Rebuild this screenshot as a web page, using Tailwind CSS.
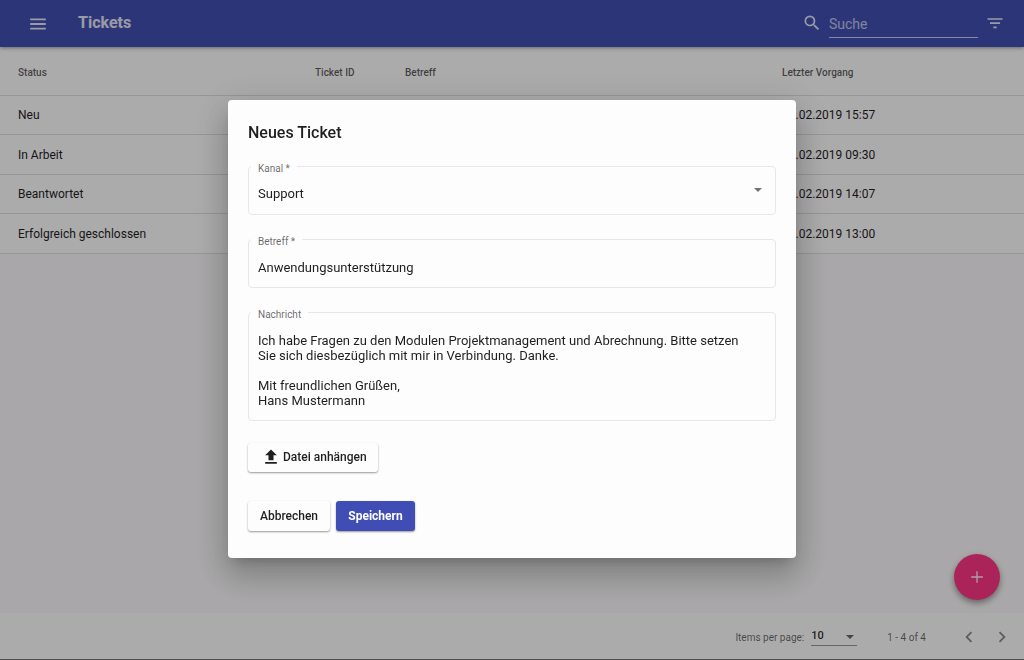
<!DOCTYPE html>
<html lang="de">
<head>
<meta charset="utf-8">
<meta name="viewport" content="width=device-width, initial-scale=1">
<title>Tickets</title>
<script src="https://cdn.jsdelivr.net/npm/@tailwindcss/browser@4"></script>
</head>
<body class="font-['Roboto',sans-serif] text-[#1f1f1f]">
<div class="flex min-h-screen flex-col border-b border-[#777] bg-[#f9f7f9]">
  <header class="relative z-10 flex h-[47px] items-center bg-[#434fb3] pr-[19px] pl-[27px] text-white/85 shadow-[0_1px_4px_rgba(0,0,0,0.4)]">
    <button type="button" aria-label="Menü" class="size-[22px]">
      <svg viewBox="0 0 24 24" class="mb-[2px] size-[22px]" fill="currentColor"><path d="M3.500 18h17v-2h-17v2zm0-5h17v-2h-17v2zm0-7v2h17V6h-17z"/></svg>
    </button>
    <h1 class="ml-[29px] pb-[2px] text-base font-bold">Tickets</h1>
    <div class="ml-auto flex items-center">
      <label for="suche" aria-label="Suche"><svg viewBox="0 0 24 24" class="mb-[2px] size-5" fill="currentColor"><path d="M15.5 14h-.79l-.28-.27A6.471 6.471 0 0 0 16 9.5 6.5 6.5 0 1 0 9.500 16c1.610 0 3.090-.59 4.230-1.570l.27.28v.79l5 4.990L20.490 19l-4.990-5zm-6 0C7.010 14 5 11.990 5 9.500S7.010 5 9.500 5 14 7.010 14 9.500 11.990 14 9.500 14z"/></svg></label>
      <input id="suche" type="text" placeholder="Suche" class="mt-2 ml-[7px] h-[21px] w-[149px] border-b border-white/70 bg-transparent pb-[6px] text-sm outline-none placeholder:text-white/65">
      <button type="button" aria-label="Filter" class="ml-[7px] size-5">
        <svg viewBox="0 0 24 24" class="size-5" fill="currentColor"><path d="M10 17h4v-2h-4v2zM3 5v2h18V5H3zm3 7h12v-2H6v2z"/></svg>
      </button>
    </div>
  </header>

  <main class="flex-1">
    <table class="w-full table-fixed border-separate border-spacing-0 bg-[#fefcfe] text-left text-xs [&_td]:border-b [&_td]:border-black/12 [&_th]:border-b [&_th]:border-black/12 [&_th]:pt-[3px] [&_td:first-child]:pl-[18px] [&_th:first-child]:pl-[18px]">
      <colgroup><col class="w-[315px]"><col class="w-[90px]"><col><col class="w-[242px]"></colgroup>
      <thead>
        <tr class="h-[49px] text-[10px] text-black/65"><th class="font-medium">Status</th><th class="font-medium">Ticket ID</th><th class="font-medium">Betreff</th><th class="font-medium">Letzter Vorgang</th></tr>
      </thead>
      <tbody>
        <tr class="h-[39px]"><td>Neu</td><td></td><td></td><td>18.02.2019 15:57</td></tr>
        <tr class="h-[40px]"><td>In Arbeit</td><td></td><td></td><td>18.02.2019 09:30</td></tr>
        <tr class="h-[39px]"><td>Beantwortet</td><td></td><td></td><td>15.02.2019 14:07</td></tr>
        <tr class="h-[40px]"><td>Erfolgreich geschlossen</td><td></td><td></td><td>14.02.2019 13:00</td></tr>
      </tbody>
    </table>
  </main>

  <footer class="flex h-[46px] items-center justify-end bg-[#fefcfe] pt-[2px] pr-[11px] text-[10px] text-black/60">
    <label for="pagesize">Items per page:</label>
    <div class="relative ml-[7px] flex items-center">
      <select id="pagesize" class="h-[18px] w-[46px] appearance-none border-b border-black/40 bg-transparent text-[11px] font-medium text-black/85"><option>10</option><option>25</option></select>
      <svg viewBox="0 0 8 4" class="pointer-events-none absolute right-[3px] h-1 w-2" fill="currentColor"><path d="M0 0h8L4 4z"/></svg>
    </div>
    <span class="ml-[30px]">1 - 4 of 4</span>
    <button type="button" aria-label="Vorherige Seite" class="ml-8 size-[22px] text-black/45"><svg viewBox="0 0 24 24" class="size-[22px]" fill="currentColor"><path d="M15.410 7.410L14 6l-6 6 6 6 1.410-1.410L10.830 12z"/></svg></button>
    <button type="button" aria-label="Nächste Seite" class="ml-[11px] size-[22px] text-black/45"><svg viewBox="0 0 24 24" class="size-[22px]" fill="currentColor"><path d="M10 6L8.590 7.410 13.170 12l-4.580 4.590L10 18l6-6z"/></svg></button>
  </footer>
</div>

<button type="button" aria-label="Neues Ticket" class="fixed right-6 bottom-[60px] flex size-[46px] items-center justify-center rounded-full bg-[#fc3684] text-white/90 shadow-[0_3px_6px_rgba(0,0,0,0.4)]">
  <svg viewBox="0 0 24 24" class="size-5" fill="currentColor"><path d="M19 12.800h-6.200v6.200h-1.600v-6.200H5v-1.600h6.200V5h1.600v6.200h6.200v1.600z"/></svg>
</button>

<div class="fixed inset-0 z-20 flex items-center justify-center bg-black/32 pb-[3px]">
  <form role="dialog" aria-labelledby="titel" class="w-[568px] max-w-full rounded-[4px] bg-[#fefdfe] px-5 pt-[21px] pb-[27px] shadow-[0_9px_12px_-6px_rgba(0,0,0,0.2),0_19px_30px_3px_rgba(0,0,0,0.14),0_7px_36px_6px_rgba(0,0,0,0.12)]">
    <h2 id="titel" class="text-base font-medium">Neues Ticket</h2>
    <div class="mt-[21px] flex flex-col gap-6 text-[13px]">
      <div class="relative">
        <label for="kanal" class="absolute -top-1 left-[3px] bg-[#fefdfe] px-[7px] text-[10px] leading-[14px] text-black/60">Kanal *</label>
        <select id="kanal" class="block h-[49px] w-full appearance-none rounded-[4px] border border-[#e9e6ea] bg-transparent px-[9px] pt-2"><option>Support</option></select>
        <svg viewBox="0 0 8 4" class="pointer-events-none absolute top-[22px] right-[14px] h-1 w-2 text-black/55" fill="currentColor"><path d="M0 0h8L4 4z"/></svg>
      </div>
      <div class="relative">
        <label for="betreff" class="absolute -top-1 left-[3px] bg-[#fefdfe] px-[7px] text-[10px] leading-[14px] text-black/60">Betreff *</label>
        <input id="betreff" type="text" value="Anwendungsunterstützung" class="block h-[49px] w-full rounded-[4px] border border-[#e9e6ea] bg-transparent px-[9px] pt-2">
      </div>
      <div class="relative">
        <label for="nachricht" class="absolute -top-1 left-[3px] bg-[#fefdfe] px-[7px] text-[10px] leading-[14px] text-black/60">Nachricht</label>
        <textarea id="nachricht" class="block h-[109px] w-full resize-none rounded-[4px] border border-[#e9e6ea] bg-transparent pt-5 pr-6 pl-[9px] leading-[15px]">Ich habe Fragen zu den Modulen Projektmanagement und Abrechnung. Bitte setzen Sie sich diesbezüglich mit mir in Verbindung. Danke.

Mit freundlichen Grüßen,
Hans Mustermann</textarea>
      </div>
    </div>
    <button type="button" class="mt-[22px] flex h-[29px] w-[130px] items-center rounded-[3px] pl-[13px] text-xs font-medium shadow-[0_1px_2px_rgba(0,0,0,0.4)]">
      <svg viewBox="0 0 24 24" class="mr-[2px] size-5" fill="currentColor"><path d="M9 16h6v-6h4l-7-7-7 7h4zm-4 2h14v2H5z"/></svg>
      Datei anhängen
    </button>
    <div class="mt-[29px] flex gap-[6px] text-xs font-medium">
      <button type="button" class="h-[30px] w-[82px] rounded-[3px] shadow-[0_1px_2px_rgba(0,0,0,0.4)]">Abbrechen</button>
      <button type="submit" class="h-[30px] w-[79px] rounded-[3px] bg-[#3f4db5] font-bold text-white shadow-[0_1px_2px_rgba(0,0,0,0.4)]">Speichern</button>
    </div>
  </form>
</div>
</body>
</html>
